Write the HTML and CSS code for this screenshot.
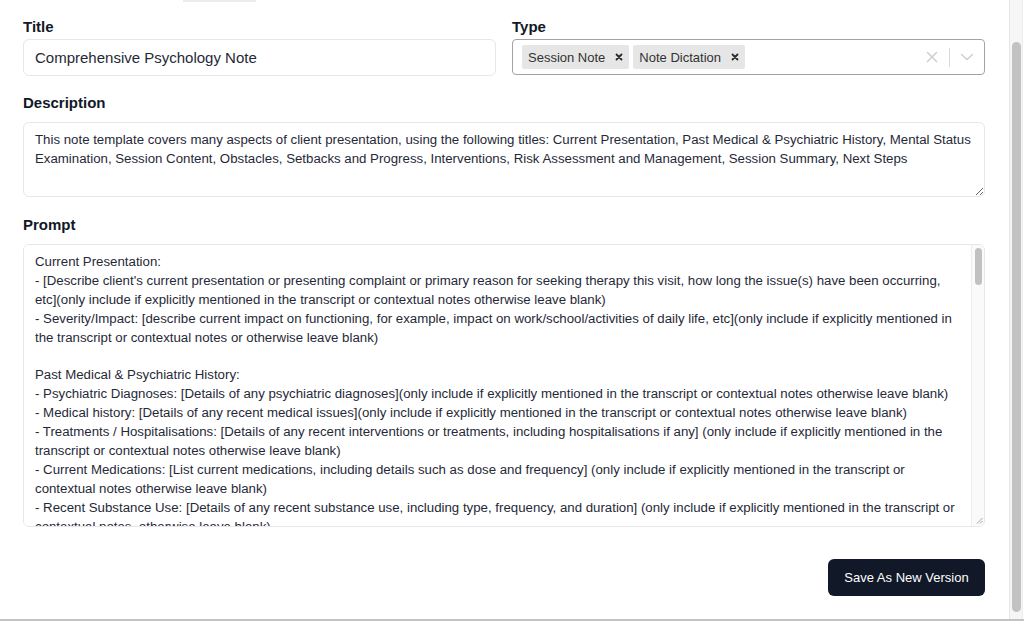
FILE: index.html
```html
<!DOCTYPE html>
<html lang="en">
<head>
    <meta charset="UTF-8">
    <meta name="viewport" content="width=device-width, initial-scale=1.0">
    <title>Edit Template</title>
    <link rel="stylesheet" href="styles.css">
</head>
<body>
    <div class="frame">
        <div class="modal">
            <div class="tab-line"></div>

            <div class="row">
                <div class="field">
                    <label for="title" class="field-label">Title</label>
                    <input type="text" id="title" class="text-input" value="Comprehensive Psychology Note">
                </div>
                <div class="field">
                    <label class="field-label">Type</label>
                    <div class="select">
                        <div class="select-values">
                            <span class="chip">
                                <span class="chip-label">Session Note</span>
                                <span class="chip-remove">
                                    <svg width="8" height="8" viewBox="0 0 8 8"><path d="M1.5 1.5 6.5 6.5M6.5 1.5 1.5 6.5" stroke="#2b2b2b" stroke-width="1.8" stroke-linecap="round"/></svg>
                                </span>
                            </span>
                            <span class="chip">
                                <span class="chip-label">Note Dictation</span>
                                <span class="chip-remove">
                                    <svg width="8" height="8" viewBox="0 0 8 8"><path d="M1.5 1.5 6.5 6.5M6.5 1.5 1.5 6.5" stroke="#2b2b2b" stroke-width="1.8" stroke-linecap="round"/></svg>
                                </span>
                            </span>
                        </div>
                        <div class="select-indicators">
                            <span class="indicator">
                                <svg width="12" height="12" viewBox="0 0 12 12"><path d="M1.5 1.5 10.5 10.5M10.5 1.5 1.5 10.5" stroke="#cfcfcf" stroke-width="1.6" stroke-linecap="round"/></svg>
                            </span>
                            <span class="separator"></span>
                            <span class="indicator">
                                <svg width="14" height="8" viewBox="0 0 14 8"><path d="M1.5 1.5 7 6.5 12.5 1.5" fill="none" stroke="#cfcfcf" stroke-width="1.5" stroke-linecap="round" stroke-linejoin="round"/></svg>
                            </span>
                        </div>
                    </div>
                </div>
            </div>

            <div class="block">
                <label for="description" class="field-label">Description</label>
                <textarea id="description" class="text-area desc-area">This note template covers many aspects of client presentation, using the following titles: Current Presentation, Past Medical &amp; Psychiatric History, Mental Status Examination, Session Content, Obstacles, Setbacks and Progress, Interventions, Risk Assessment and Management, Session Summary, Next Steps</textarea>
            </div>

            <div class="block prompt-block">
                <label for="prompt" class="field-label">Prompt</label>
                <div class="prompt-box">
                    <textarea id="prompt" class="prompt-area">Current Presentation:
- [Describe client's current presentation or presenting complaint or primary reason for seeking therapy this visit, how long the issue(s) have been occurring, etc](only include if explicitly mentioned in the transcript or contextual notes otherwise leave blank)
- Severity/Impact: [describe current impact on functioning, for example, impact on work/school/activities of daily life, etc](only include if explicitly mentioned in the transcript or contextual notes or otherwise leave blank)

Past Medical &amp; Psychiatric History:
- Psychiatric Diagnoses: [Details of any psychiatric diagnoses](only include if explicitly mentioned in the transcript or contextual notes otherwise leave blank)
- Medical history: [Details of any recent medical issues](only include if explicitly mentioned in the transcript or contextual notes otherwise leave blank)
- Treatments / Hospitalisations: [Details of any recent interventions or treatments, including hospitalisations if any] (only include if explicitly mentioned in the transcript or contextual notes otherwise leave blank)
- Current Medications: [List current medications, including details such as dose and frequency] (only include if explicitly mentioned in the transcript or contextual notes otherwise leave blank)
- Recent Substance Use: [Details of any recent substance use, including type, frequency, and duration] (only include if explicitly mentioned in the transcript or contextual notes, otherwise leave blank)
- Family History: [Details of any relevant family history of mental health or medical conditions] (only include if explicitly mentioned in the transcript or contextual notes, otherwise leave blank)
- Social History: [Details of living situation, relationships, employment and supports] (only include if explicitly mentioned in the transcript or contextual notes, otherwise leave blank)

Mental Status Examination:
- Appearance: [Describe client's appearance, grooming and dress] (only include if explicitly mentioned in the transcript or contextual notes, otherwise leave blank)
- Behaviour: [Describe client's behaviour, engagement and eye contact during the session] (only include if explicitly mentioned in the transcript or contextual notes, otherwise leave blank)
- Speech: [Describe rate, volume, tone and fluency of speech] (only include if explicitly mentioned in the transcript or contextual notes, otherwise leave blank)
- Mood: [Describe client's self-reported mood] (only include if explicitly mentioned in the transcript or contextual notes, otherwise leave blank)
- Affect: [Describe client's observed affect, range and congruence with mood] (only include if explicitly mentioned in the transcript or contextual notes, otherwise leave blank)
- Thoughts: [Describe form and content of thought, including any preoccupations] (only include if explicitly mentioned in the transcript or contextual notes, otherwise leave blank)
- Perceptions: [Describe any perceptual disturbances] (only include if explicitly mentioned in the transcript or contextual notes, otherwise leave blank)
- Cognition: [Describe orientation, attention, memory and concentration] (only include if explicitly mentioned in the transcript or contextual notes, otherwise leave blank)
- Insight: [Describe client's level of insight into their difficulties] (only include if explicitly mentioned in the transcript or contextual notes, otherwise leave blank)
- Judgment: [Describe client's judgment and decision making] (only include if explicitly mentioned in the transcript or contextual notes, otherwise leave blank)

Session Content:
- [Describe the main topics and issues discussed in the session, including any significant events since the last session] (only include if explicitly mentioned in the transcript or contextual notes, otherwise leave blank)
- [Describe the client's thoughts, feelings and reactions to the topics discussed] (only include if explicitly mentioned in the transcript or contextual notes, otherwise leave blank)

Obstacles, Setbacks and Progress:
- [Describe any obstacles or setbacks the client has experienced since the last session] (only include if explicitly mentioned in the transcript or contextual notes, otherwise leave blank)
- [Describe any progress the client has made toward their therapy goals] (only include if explicitly mentioned in the transcript or contextual notes, otherwise leave blank)

Interventions:
- [Describe the therapeutic interventions and techniques used during the session] (only include if explicitly mentioned in the transcript or contextual notes, otherwise leave blank)

Risk Assessment and Management:
- [Details of any risk to self or others, protective factors and safety planning] (only include if explicitly mentioned in the transcript or contextual notes, otherwise leave blank)

Session Summary:
- [Summarise the key themes, insights and outcomes of the session] (only include if explicitly mentioned in the transcript or contextual notes, otherwise leave blank)

Next Steps:
- [Describe any homework, referrals or plans for the next session] (only include if explicitly mentioned in the transcript or contextual notes, otherwise leave blank)</textarea>
                    <div class="scroll-track">
                        <div class="scroll-thumb"></div>
                        <svg class="grip" width="7" height="7" viewBox="0 0 7 7"><path d="M6.5 1 1 6.5M6.5 4 4 6.5" stroke="#9a9a9a" stroke-width="0.9"/></svg>
                    </div>
                </div>
            </div>

            <div class="actions">
                <button class="save-btn">Save As New Version</button>
            </div>
        </div>

        <div class="page-scroll">
            <div class="page-thumb"></div>
        </div>
    </div>
</body>
</html>
```

FILE: styles.css
```css
body {
    margin: 0;
    font-family: 'Liberation Sans', Arial, sans-serif;
    background-color: #ffffff;
    color: #1f2937;
    overflow: hidden;
}

.frame {
    display: flex;
    height: 619px;
    border-bottom: 2px solid #c4c4c4;
    background-color: #ffffff;
}

.modal {
    flex: 1;
    padding: 0 24px 0 23px;
}

.tab-line {
    width: 73px;
    height: 2px;
    margin-left: 160px;
    background-color: #ececec;
}

.row {
    display: grid;
    grid-template-columns: 1fr 1fr;
    column-gap: 16px;
    margin-top: 15px;
}

.field-label {
    display: block;
    font-size: 15px;
    font-weight: bold;
    line-height: 20px;
    color: #111827;
}

.text-input {
    display: block;
    box-sizing: border-box;
    width: 100%;
    height: 37px;
    margin-top: 2px;
    padding: 0 11px;
    border: 1px solid #e5e7eb;
    border-radius: 6px;
    font-family: inherit;
    font-size: 15px;
    color: #1f2937;
    outline: none;
}

.select {
    display: flex;
    align-items: center;
    box-sizing: border-box;
    height: 36px;
    margin-top: 2px;
    border: 1px solid #a3a3a3;
    border-radius: 4px;
}

.select-values {
    flex: 1;
    display: flex;
    gap: 4px;
    padding-left: 9px;
}

.chip {
    display: flex;
    align-items: center;
    height: 24px;
    background-color: #e6e6e6;
    border-radius: 2px;
    font-size: 13px;
    color: #333333;
}

.chip-label {
    padding: 0 4px 0 6px;
}

.chip-remove {
    display: flex;
    align-items: center;
    justify-content: center;
    width: 20px;
    height: 24px;
}

.select-indicators {
    display: flex;
    align-items: center;
    height: 100%;
}

.indicator {
    display: flex;
    align-items: center;
    justify-content: center;
    width: 34px;
    height: 100%;
}

.separator {
    width: 1px;
    height: 19px;
    background-color: #d9d9d9;
}

.block {
    margin-top: 17px;
}

.prompt-block {
    margin-top: 18px;
}

.text-area {
    display: block;
    box-sizing: border-box;
    width: 100%;
    margin-top: 9px;
    padding: 8px 8px 8px 11px;
    border: 1px solid #e5e7eb;
    border-radius: 6px;
    font-family: inherit;
    font-size: 13.25px;
    line-height: 18.9px;
    color: #1f2937;
    outline: none;
}

.desc-area {
    height: 75px;
}

.prompt-box {
    display: flex;
    box-sizing: border-box;
    height: 283px;
    margin-top: 9px;
    border: 1px solid #e5e7eb;
    border-radius: 6px;
    overflow: hidden;
}

.prompt-area {
    flex: 1;
    box-sizing: border-box;
    height: 100%;
    padding: 8px 9px 8px 11px;
    border: none;
    resize: none;
    overflow: hidden;
    font-family: inherit;
    font-size: 13.25px;
    line-height: 18.9px;
    color: #1f2937;
    outline: none;
}

.scroll-track {
    display: flex;
    flex-direction: column;
    align-items: center;
    width: 12px;
    padding: 3px 0 2px;
    background-color: #fafafa;
    border-left: 1px solid #ededed;
}

.scroll-thumb {
    width: 7px;
    height: 37px;
    background-color: #c1c1c1;
    border-radius: 4px;
}

.grip {
    margin-top: auto;
    margin-left: 2px;
}

.actions {
    display: flex;
    justify-content: flex-end;
    margin-top: 32px;
}

.save-btn {
    width: 157px;
    height: 37px;
    border: none;
    border-radius: 6px;
    background-color: #111827;
    color: #ffffff;
    font-family: inherit;
    font-size: 13px;
    cursor: pointer;
}

.page-scroll {
    width: 14px;
    margin-right: 1px;
    padding: 42px 0 7px;
    box-sizing: border-box;
    background-color: #f6f6f6;
    border-left: 1px solid #e6e6e6;
    border-right: 1px solid #ececec;
}

.page-thumb {
    width: 9px;
    height: 100%;
    margin: 0 auto;
    background-color: #c2c2c2;
    border-radius: 5px;
}
```
